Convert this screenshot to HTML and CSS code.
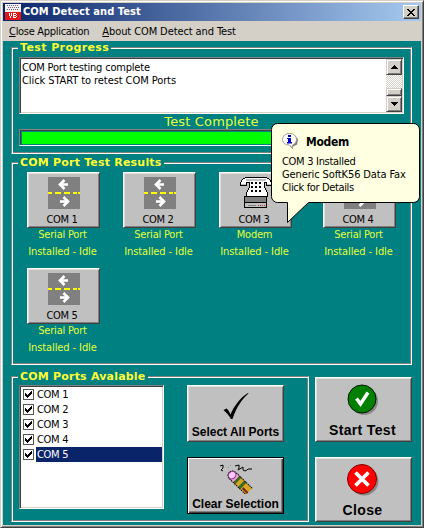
FILE: index.html
```html
<!DOCTYPE html>
<html lang="en">
<head>
<meta charset="utf-8">
<title>COM Detect and Test</title>
<link rel="stylesheet" href="styles.css">
</head>
<body>
<svg class="defs" width="0" height="0" aria-hidden="true">
  <symbol id="serial" viewBox="0 0 32 32" shape-rendering="crispEdges">
    <path fill="#808080" d="M0 0h32v32H0z"/>
    <path stroke="#ff0" stroke-width="2" d="M0 16h4M7 16h6M16 16h6M25 16h4M30 16h2"/>
    <path fill="none" stroke="#fff" stroke-width="2.600" shape-rendering="auto" d="M20 7.500h-8M16.500 3l-4.500 4.500 4.500 4.500"/>
    <path fill="none" stroke="#fff" stroke-width="2.600" shape-rendering="auto" d="M12 24.500h8M15.500 20l4.500 4.500-4.500 4.500"/>
  </symbol>
  <symbol id="tick" viewBox="0 0 7 7" shape-rendering="crispEdges">
    <path d="M0 2h1v3H0zM1 3h1v3H1zM2 4h1v3H2zM3 3h1v3H3zM4 2h1v3H4zM5 1h1v3H5zM6 0h1v3H6z"/>
  </symbol>
</svg>
<div class="window">
  <header class="titlebar">
    <svg class="app-icon" width="16" height="16" shape-rendering="crispEdges">
      <path fill="#f4f0f4" d="M0 0h16v8H0z"/><path fill="#e01818" d="M0 8h16v8H0z"/>
      <path stroke="#706878" stroke-dasharray="1 1" d="M2 1.5h12M3 3.5h3M7 3.5h3M11 3.5h3M2 5.5h12"/>
      <path fill="#fff" d="M4 9h1v3H4zM5 12h1v2H5zM6 9h1v3H6zM8 9h3v1H8zM8 9h1v5H8zM8 11h3v1H8zM8 13h3v1H8zM11 10h1v1h-1zM11 12h1v1h-1z"/>
    </svg>
    <h1 class="title">COM Detect and Test</h1>
    <button class="x-btn" aria-label="Close"><svg width="8" height="7" shape-rendering="crispEdges"><path d="M0 0h2v1H0zM6 0h2v1H6zM1 1h2v1H1zM5 1h2v1H5zM2 2h4v1H2zM3 3h2v1H3zM2 4h4v1H2zM1 5h2v1H1zM5 5h2v1H5zM0 6h2v1H0zM6 6h2v1H6z"/></svg></button>
  </header>
  <nav class="menu"><span class="m1"><u>C</u>lose Application</span><span class="m2"><u>A</u>bout COM Detect and Test</span></nav>
  <main class="client">
    <section class="frame progress">
      <h2 class="legend l1">Test Progress</h2>
      <div class="log">
        <div class="log-text">COM Port testing complete<br><span class="line2">Click START to retest COM Ports</span></div>
        <div class="scroll">
          <span class="sbtn"><svg width="7" height="4" shape-rendering="crispEdges"><path d="M3 0h1v1H3zM2 1h3v1H2zM1 2h5v1H1zM0 3h7v1H0z"/></svg></span>
          <span class="track"></span><span class="thumb"></span>
          <span class="sbtn"><svg width="7" height="4" shape-rendering="crispEdges"><path d="M0 0h7v1H0zM1 1h5v1H1zM2 2h3v1H2zM3 3h1v1H3z"/></svg></span>
        </div>
      </div>
      <div class="status"><span>Test Complete</span></div>
      <div class="bar"><div class="fill"></div></div>
    </section>
    <section class="frame results">
      <h2 class="legend l2">COM Port Test Results</h2>
      <div class="ports">
        <div class="port"><button class="btn"><svg width="32" height="32"><use href="#serial"/></svg><span>COM 1</span></button><p class="sp">Serial Port</p><p class="idle">Installed - Idle</p></div>
        <div class="port"><button class="btn"><svg width="32" height="32"><use href="#serial"/></svg><span>COM 2</span></button><p class="sp">Serial Port</p><p class="idle">Installed - Idle</p></div>
        <div class="port"><button class="btn"><svg width="32" height="32" shape-rendering="crispEdges">
          <path fill="#fff" stroke="#000" d="M2.500 2.500l3-2h21l3 2 2 3v3h-5v-3h-2v4l3 7v3h-21v-3l3-7v-4h-3v3h-6v-3z"/>
          <path fill="#c0c0c0" d="M6 2h20v2H6zM1 7h5v1H1zM27 7h4v1h-4z"/>
          <path stroke="#000" stroke-width="2" stroke-dasharray="2 2" d="M11 6h10M11 10h10M11 14h10"/>
          <path fill="#808080" stroke="#000" d="M4.500 19.500h22v6h-22z"/>
          <path fill="#c0c0c0" stroke="#000" d="M4.500 25.500h22v5h-22z"/>
          <path stroke="#808080" d="M8 28.500h8"/><path stroke="#c02020" stroke-dasharray="1 1" d="M18 28.500h7"/>
        </svg><span>COM 3</span></button><p class="modem">Modem</p><p class="idle">Installed - Idle</p></div>
        <div class="port"><button class="btn"><svg width="32" height="32"><use href="#serial"/></svg><span>COM 4</span></button><p class="sp">Serial Port</p><p class="idle">Installed - Idle</p></div>
        <div class="port"><button class="btn"><svg width="32" height="32"><use href="#serial"/></svg><span>COM 5</span></button><p class="sp">Serial Port</p><p class="idle">Installed - Idle</p></div>
      </div>
    </section>
    <div class="bottom">
      <section class="frame avail">
        <h2 class="legend l3">COM Ports Avalable</h2>
        <ul class="list">
          <li><i class="box"><svg width="7" height="7"><use href="#tick"/></svg></i><span>COM 1</span></li>
          <li><i class="box"><svg width="7" height="7"><use href="#tick"/></svg></i><span>COM 2</span></li>
          <li><i class="box"><svg width="7" height="7"><use href="#tick"/></svg></i><span>COM 3</span></li>
          <li><i class="box"><svg width="7" height="7"><use href="#tick"/></svg></i><span>COM 4</span></li>
          <li class="sel"><i class="box"><svg width="7" height="7"><use href="#tick"/></svg></i><span>COM 5</span></li>
        </ul>
        <div class="col">
          <button class="btn big select"><svg width="28" height="28"><path d="M1.500 17l3-1.500c2 1.500 3 4 4 6C12 13 19 4 26 0l.5.500C20 6 14 15 10.500 26H9C6.500 22 4.500 19.500 1.500 17z"/></svg><span>Select All Ports</span></button>
          <button class="btn big clear"><svg width="34" height="32">
            <path fill="none" stroke="#000" d="M1 4l3-1v3l-2 2 2 1M16 4l4-1v3l-1 2 5-3v3l2 1 2-1 1-1h4"/>
            <path fill="none" stroke="#888" stroke-dasharray="1 2" d="M9 6l4-4"/>
            <g transform="translate(13.500 13.500) rotate(44)">
              <path fill="#dba528" d="M0-4.500h23v9H0z"/><path fill="#3c6c24" d="M5-4.500h3v9H5zM12-4.500h3v9h-3z"/>
              <path fill="#702010" d="M16 1h7v2h-7z"/><path fill="#f0a0e8" d="M5-4.500H0a4.500 4.500 0 0 0 0 9h5z"/>
              <path fill="none" stroke="#000" stroke-dasharray="1.500 .8" d="M23-4.500H0a4.500 4.500 0 0 0 0 9h23"/>
              <ellipse fill="#ffc8ff" stroke="#803078" cx="-.5" cy="0" rx="3.500" ry="4"/>
            </g></svg><span>Clear Selection</span></button>
        </div>
      </section>
      <div class="actions">
        <button class="btn act start"><svg width="32" height="32"><circle cx="17" cy="17" r="14" fill="#888"/><circle cx="15" cy="15" r="14" fill="#008000" stroke="#001800"/><path fill="none" stroke="#fff" stroke-width="3.500" d="M9.500 14.500l4 5.500L21 8.500"/></svg><span>Start Test</span></button>
        <button class="btn act close"><svg width="32" height="32"><circle cx="17" cy="17" r="14.500" fill="#888"/><circle cx="15" cy="15" r="14.500" fill="#f00" stroke="#800000"/><path stroke="#fff" stroke-width="3.800" d="M8.500 8.500l13 13M21.500 8.500l-13 13"/></svg><span>Close</span></button>
      </div>
    </div>
  </main>
</div>
<aside class="balloon">
  <svg class="shape" width="150" height="101"><path fill="#ffffe1" stroke="#000" d="M6.500 .5h136a6 6 0 0 1 6 6v67a6 6 0 0 1-6 6H37.500L16.500 99.500v-20h-10a6 6 0 0 1-6-6v-67a6 6 0 0 1 6-6z"/></svg>
  <div class="b-head"><svg width="17" height="16"><path fill="#777" d="M8 2.500h5l3 4-1 5-4 2v2.500l-3-2.500z"/><path fill="#fff" stroke="#999" d="M7.500.5c4 0 7 2.500 7 6 0 3-2 5-4 5.500V15l-3-3c-4 0-7-2-7-5.500s3-6 7-6z"/><path fill="#00c" d="M6 2h3v2H6zM5 5h4v4h1v1.500H5V9h1V6H5z"/></svg><strong>Modem</strong></div>
  <p class="b1">COM 3 Installed</p><p class="b2">Generic SoftK56 Data Fax</p><p class="b3">Click for Details</p>
</aside>
</body>
</html>
```
FILE: styles.css
```css
* { box-sizing: border-box; }
body, h1, h2, p, ul { margin: 0; padding: 0; }
body { width: 424px; height: 528px; overflow: hidden; font: 11px/13px "DejaVu Sans Condensed", "DejaVu Sans", sans-serif; color: #000; letter-spacing: -.3px; white-space: nowrap; }
.defs { display: block; position: absolute; }
svg { display: block; flex: none; }
button { font: inherit; letter-spacing: inherit; color: inherit; padding: 0; margin: 0; border-radius: 0; }

.window { height: 528px; background: #d4d0c8; border: 1px solid; border-color: #d4d0c8 #404040 #404040 #d4d0c8; box-shadow: inset 1px 1px #fff, inset -1px -1px #808080; display: flex; flex-direction: column; padding: 2px 2px 2px 2px; }
.titlebar { height: 18px; flex: none; display: flex; align-items: center; padding: 0 2px; background: linear-gradient(90deg, #0a246a, #a6caf0); }
.title { flex: 1; margin-left: 2px; font: bold 11px/16px "DejaVu Sans Condensed", sans-serif; color: #fff; letter-spacing: .08px; }
.x-btn { width: 16px; height: 14px; display: flex; align-items: center; justify-content: center; background: #d4d0c8; border: 1px solid; border-color: #fff #404040 #404040 #fff; box-shadow: inset -1px -1px #808080; }
.menu { height: 20px; flex: none; padding: 4px 6px 0; display: flex; gap: 13px; }
.m2 { letter-spacing: -.1px; }

.client { flex: 1; background: #008080; padding: 6px 9px 2px 8px; display: flex; flex-direction: column; }
.frame { border: 1px solid; border-color: #808080 #fff #fff #808080; box-shadow: inset 1px 1px #fff, inset -1px -1px #808080; }
.legend { grid-column: 1 / 3; width: max-content; height: 12px; margin: -6px 0 0 -1px; padding: 0 2px; background: #008080; color: #ff3; font: bold 11px/12px "DejaVu Sans", sans-serif; letter-spacing: .2px; }
.l1 { letter-spacing: .4px; }
.progress { flex: none; height: 107px; padding: 0 7px; }
.log { margin-top: 3px; height: 57px; display: flex; justify-content: space-between; background: #fff; border: 1px solid; border-color: #808080 #fff #fff #808080; box-shadow: inset 1px 1px #404040, inset -1px -1px #d4d0c8; padding: 1px; }
.log-text { padding: 2px 1px; letter-spacing: -.2px; }
.line2 { letter-spacing: -.08px; }
.scroll { width: 16px; display: flex; flex-direction: column; }
.sbtn, .thumb { flex: none; height: 16px; display: flex; align-items: center; justify-content: center; background: #d4d0c8; border: 1px solid; border-color: #d4d0c8 #404040 #404040 #d4d0c8; box-shadow: inset 1px 1px #fff, inset -1px -1px #808080; }
.thumb { height: 8px; }
.track { flex: 1; background: repeating-conic-gradient(#fff 0 25%, #d4d0c8 0 50%) 0 0 / 2px 2px; }
.status { height: 15px; text-align: center; color: #e4ff3c; font: 13px/16px "DejaVu Sans", sans-serif; letter-spacing: .15px; }
.bar { height: 17px; border: 1px solid; border-color: #808080 #fff #fff #808080; box-shadow: inset 1px 1px #404040; padding: 2px 1px 1px 2px; }
.fill { height: 100%; background: #0f0; }

.results { flex: none; height: 203px; margin-top: 8px; padding: 0 7px; }
.ports { display: grid; grid-template-columns: 96px 96px 104px 73px; grid-auto-rows: 96px; padding: 3px 0 0 8px; }
.port { width: 73px; text-align: center; color: #e4ff3c; }
.port p { line-height: 16px; margin: 0 -4px 0 -6px; }
.port .sp, .port .modem { letter-spacing: -.2px; }
.port .idle { margin-top: 1px; letter-spacing: -.1px; }
.btn { display: flex; flex-direction: column; align-items: center; background: #c0c0c0; color: #000; border: 1px solid; border-color: #fff #404040 #404040 #fff; box-shadow: inset 1px 1px #dfdfdf, inset -1px -1px #808080; }
.port .btn { width: 73px; height: 56px; padding-top: 4px; margin-bottom: -1px; }
.port .btn span { margin-top: 4px; margin-right: 3px; }

.bottom { display: flex; justify-content: space-between; margin-top: 11px; }
.avail { width: 298px; height: 146px; padding: 0 7px; display: grid; grid-template-columns: 168px 97px; grid-template-rows: 8px 130px; align-content: start; }
.list { width: 145px; height: 124px; list-style: none; background: #fff; border: 1px solid; border-color: #808080 #fff #fff #808080; box-shadow: inset 1px 1px #404040, inset -1px -1px #d4d0c8; padding: 1px; }
.list li { height: 15px; display: flex; padding-left: 2px; gap: 2px; }
.box { width: 11px; height: 11px; margin-top: 2px; border: 1px solid #555; display: flex; align-items: center; justify-content: center; }
.list span { flex: 1; padding-left: 1px; line-height: 15px; }
.sel span { background: #0a246a; color: #fff; }
.col { display: grid; gap: 15px; align-content: start; }
.big { width: 97px; height: 57px; font: bold 12px/14px "Liberation Sans", sans-serif; letter-spacing: 0; }
.select { padding-top: 7px; }
.select span { margin-top: 4px; }
.clear { padding-top: 4px; border-color: #000; box-shadow: inset 1px 1px #fff, inset -1px -1px #404040, inset -2px -2px #808080; }
.clear span { margin-top: 3px; }
.actions { display: grid; gap: 15px; align-content: start; margin-top: 1px; }
.act { width: 97px; height: 65px; padding: 6px 1px 0 0; font: bold 14px/16px "Liberation Sans", sans-serif; letter-spacing: .35px; }
.act span { margin-top: 6px; margin-right: 1px; }

.balloon { position: absolute; z-index: 1; left: 271px; top: 123px; width: 150px; height: 101px; padding: 9px 0 0 11px; }
.shape { position: absolute; left: 0; top: 0; z-index: -1; }
.b-head { display: flex; align-items: center; gap: 7px; margin-bottom: 6px; }
.b-head strong { font-size: 12px; margin-top: 4px; }
.b2 { letter-spacing: -.12px; }
.b3 { letter-spacing: -.35px; }
```
